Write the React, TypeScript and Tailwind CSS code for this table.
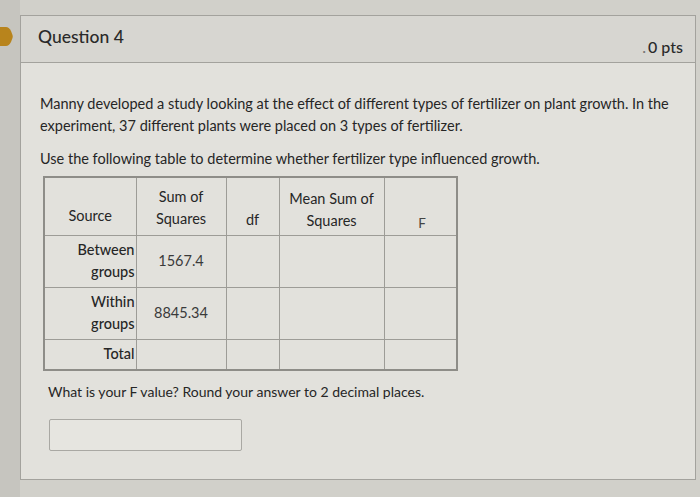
import React from "react";

const font = { fontFamily: "Lato, 'Noto Sans', 'Liberation Sans', sans-serif" };

export default function App() {
  const cell = "border border-[#9d9c97]";
  return (
    <div
      className="w-[700px] h-[497px] bg-[#d1d0ca] text-[#262626] flex overflow-hidden"
      style={font}
    >
      <div className="w-[20px] shrink-0 flex flex-col bg-[#c6c5bf]">
        <div className="h-[27px]" />
        <svg width="13" height="19" viewBox="0 0 13 19">
          <path d="M0 0 H6 Q9 0 11 4 L12.5 8 Q13 9.5 12.5 11 L11 15 Q9 19 6 19 H0 Z" fill="#b8841c" />
        </svg>
      </div>
      <div className="flex flex-col pt-[15px] pb-[17px]">
        <div className="w-[676px] flex-1 border border-[#a3a29d] bg-[#e2e1dc] flex flex-col">
          <div className="h-[47px] bg-[#d7d6d1] border-b border-[#a3a29d] flex justify-between pl-[17px] pr-[12px]">
            <div className="pt-[8px] text-[17.5px] font-medium text-[#2a2a2a]">Question 4</div>
            <div className="pt-[19px] text-[16px] font-medium text-[#2a2a2a]">
              <span className="text-[#777] mr-[2px]">.</span>0 pts
            </div>
          </div>
          <div className="pl-[19px] pr-[20px] pt-[30px] text-[14.5px] leading-[22px]">
            <p>
              Manny developed a study looking at the effect of different types of fertilizer on plant growth. In the
              experiment, 37 different plants were placed on 3 types of fertilizer.
            </p>
            <p className="mt-[11px]">Use the following table to determine whether fertilizer type influenced growth.</p>
            <table className="mt-[6px] ml-[3px] border-collapse border-2 border-[#8e8d88] text-[14.5px] leading-[22px] table-fixed">
              <tbody>
                <tr className="h-[58px]">
                  <td className={`${cell} w-[92px] px-[4px] text-center align-bottom pb-[8px]`}>Source</td>
                  <td className={`${cell} w-[90px] px-[2px] text-center align-bottom pb-[5px]`}>
                    Sum of
                    <br />
                    Squares
                  </td>
                  <td className={`${cell} w-[53px] px-[4px] text-center align-bottom pb-[4px]`}>df</td>
                  <td className={`${cell} w-[105px] px-[2px] text-center align-bottom pb-[3px]`}>
                    Mean Sum of
                    <br />
                    Squares
                  </td>
                  <td className={`${cell} w-[73px] pl-[4px] pr-[30px] text-right align-bottom pb-[1px] text-[#444] text-[13.5px]`}>
                    F
                  </td>
                </tr>
                <tr className="h-[52px]">
                  <td className={`${cell} text-right pr-[1px] pl-[2px] align-middle font-medium`}>
                    Between
                    <br />
                    groups
                  </td>
                  <td className={`${cell} px-[4px] text-center align-middle text-[#3a3a3a]`}>1567.4</td>
                  <td className={cell} />
                  <td className={cell} />
                  <td className={cell} />
                </tr>
                <tr className="h-[52px]">
                  <td className={`${cell} text-right pr-[1px] pl-[2px] align-middle font-medium`}>
                    Within
                    <br />
                    groups
                  </td>
                  <td className={`${cell} px-[4px] text-center align-middle text-[#3a3a3a]`}>8845.34</td>
                  <td className={cell} />
                  <td className={cell} />
                  <td className={cell} />
                </tr>
                <tr className="h-[31px]">
                  <td className={`${cell} text-right pr-[1px] pl-[2px] align-middle font-medium`}>Total</td>
                  <td className={cell} />
                  <td className={cell} />
                  <td className={cell} />
                  <td className={cell} />
                </tr>
              </tbody>
            </table>
            <p className="mt-[10px] ml-[8px] text-[14px]">
              What is your F value? Round your answer to 2 decimal places.
            </p>
            <div className="mt-[16px] ml-[9px] w-[193px] h-[32px] border border-[#a9a8a3] rounded-[2px] bg-[#e6e5e0]" />
          </div>
        </div>
      </div>
    </div>
  );
}
